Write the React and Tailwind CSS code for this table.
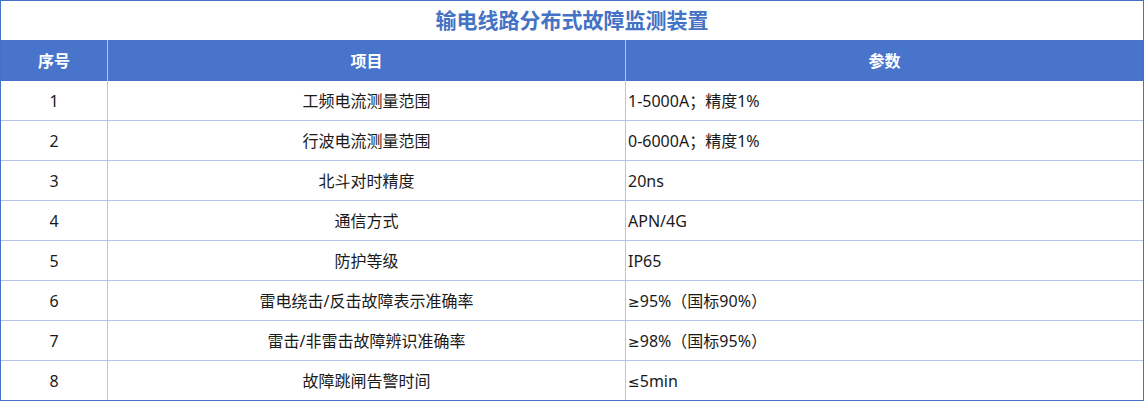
const rows = [
  ['1', '工频电流测量范围', '1-5000A；精度1%'],
  ['2', '行波电流测量范围', '0-6000A；精度1%'],
  ['3', '北斗对时精度', '20ns'],
  ['4', '通信方式', 'APN/4G'],
  ['5', '防护等级', 'IP65'],
  ['6', '雷电绕击/反击故障表示准确率', ['≥', '95%（国标90%）']],
  ['7', '雷击/非雷击故障辨识准确率', ['≥', '98%（国标95%）']],
  ['8', '故障跳闸告警时间', ['≤', '5min']],
]

const font = { fontFamily: '"Noto Sans", "Noto Sans CJK SC", sans-serif' }
const symbolFont = { fontFamily: '"DejaVu Sans", sans-serif' }

function Param({ value }) {
  if (typeof value === 'string') return value
  return (
    <>
      <span className="text-[14px]" style={symbolFont}>{value[0]}</span>
      {value[1]}
    </>
  )
}

export default function App() {
  return (
    <div
      className="w-[1144px] h-[401px] border border-[#4472c4] bg-white flex flex-col text-[16px] leading-none text-[#1a1a1a]"
      style={font}
    >
      <div className="h-[39px] flex items-center justify-center">
        <h1 className="text-[21px] font-bold text-[#4472c4] leading-none">
          输电线路分布式故障监测装置
        </h1>
      </div>

      <div className="h-[41px] flex bg-[#4874cb] text-white font-bold">
        <div className="w-[107px] border-r border-[#b4c6e7] flex items-center justify-center">序号</div>
        <div className="w-[518px] border-r border-[#b4c6e7] flex items-center justify-center">项目</div>
        <div className="flex-1 flex items-center justify-center">参数</div>
      </div>

      {rows.map((row, i) => (
        <div
          key={row[0]}
          className={`flex ${i === 0 ? 'h-[39px]' : 'h-[40px] border-t border-[#b4c6e7]'}`}
        >
          <div className="w-[107px] border-r border-[#b4c6e7] flex items-center justify-center">{row[0]}</div>
          <div className="w-[518px] border-r border-[#b4c6e7] flex items-center justify-center">{row[1]}</div>
          <div className="flex-1 flex items-center pl-[2px]">
            <span>
              <Param value={row[2]} />
            </span>
          </div>
        </div>
      ))}
    </div>
  )
}
